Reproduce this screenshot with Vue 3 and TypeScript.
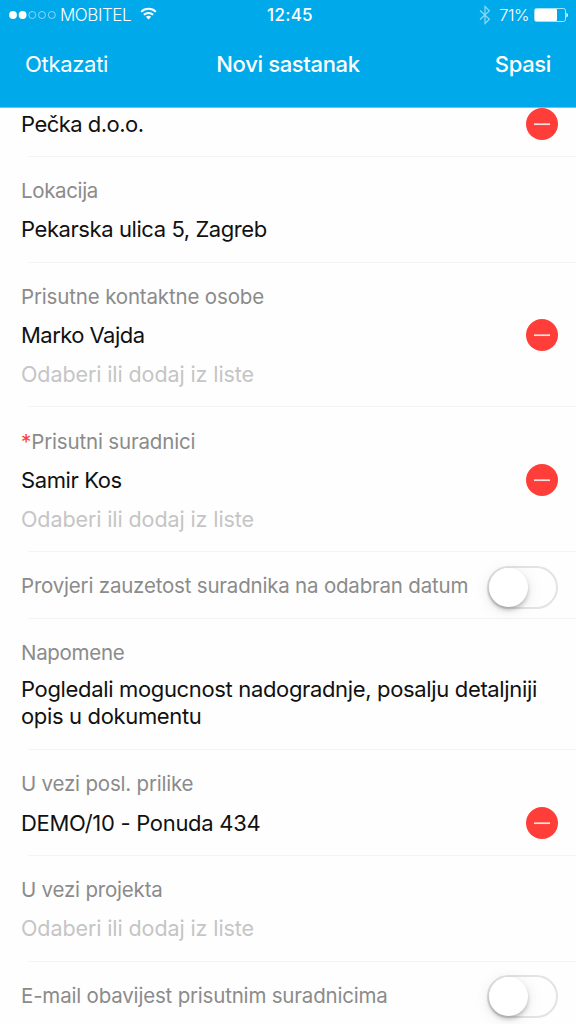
<script setup lang="ts">
interface Line {
  text: string
  kind: 'value' | 'hint'
  fit: string
  removable?: boolean
}
interface Section {
  id: string
  label?: string
  labelFit?: string
  required?: boolean
  toggle?: boolean
  lines?: Line[]
}

const hint: Line = { text: 'Odaberi ili dodaj iz liste', kind: 'hint', fit: 'f-hint' }

const sections: Section[] = [
  { id: 'company', lines: [{ text: 'Pečka d.o.o.', kind: 'value', fit: 'f-company', removable: true }] },
  { id: 'location', label: 'Lokacija', labelFit: 'l-location', lines: [{ text: 'Pekarska ulica 5, Zagreb', kind: 'value', fit: 'f-address' }] },
  { id: 'contacts', label: 'Prisutne kontaktne osobe', labelFit: 'l-contacts', lines: [{ text: 'Marko Vajda', kind: 'value', fit: 'f-marko', removable: true }, hint] },
  { id: 'staff', label: 'Prisutni suradnici', labelFit: 'l-staff', required: true, lines: [{ text: 'Samir Kos', kind: 'value', fit: 'f-samir', removable: true }, hint] },
  { id: 'busy', label: 'Provjeri zauzetost suradnika na odabran datum', labelFit: 'l-busy', toggle: true },
  { id: 'notes', label: 'Napomene', labelFit: 'l-notes', lines: [{ text: 'Pogledali mogucnost nadogradnje, posalju detaljniji\nopis u dokumentu', kind: 'value', fit: 'f-notes' }] },
  { id: 'deal', label: 'U vezi posl. prilike', labelFit: 'l-deal', lines: [{ text: 'DEMO/10 - Ponuda 434', kind: 'value', fit: 'f-deal', removable: true }] },
  { id: 'project', label: 'U vezi projekta', labelFit: 'l-project', lines: [hint] },
  { id: 'email', label: 'E-mail obavijest prisutnim suradnicima', labelFit: 'l-email', toggle: true },
]
</script>

<template>
  <div class="screen">
    <header class="top">
      <div class="status">
        <div class="carrier">
          <svg class="dots" width="48" height="10" viewBox="0 0 48 10">
            <circle cx="4" cy="5" r="3.9" fill="#fff" />
            <circle cx="13.6" cy="5" r="3.9" fill="#fff" />
            <g fill="none" stroke="#fff" stroke-opacity=".65" stroke-width=".8">
              <circle cx="23.3" cy="5" r="3.5" />
              <circle cx="33" cy="5" r="3.5" />
              <circle cx="42.8" cy="5" r="3.5" />
            </g>
          </svg>
          <span class="operator">MOBITEL</span>
          <svg class="wifi" width="17" height="13" viewBox="0 0 18 14">
            <g fill="none" stroke="#fff" stroke-width="2.1">
              <path d="M1.1 5.2a11.3 11.3 0 0 1 15.8 0" />
              <path d="M4 8.4a7.2 7.2 0 0 1 10 0" />
            </g>
            <path d="M6.2 10.6a4.1 4.1 0 0 1 5.6 0L9 13.4z" fill="#fff" />
          </svg>
        </div>
        <span class="clock">12:45</span>
        <div class="power">
          <svg class="bluetooth" width="12" height="20" viewBox="0 0 12 20">
            <path d="M1 5.5l9.4 8.7L6 18.5v-17l4.4 4.3L1 14.5" fill="none" stroke="#fff" stroke-opacity=".55" stroke-width="1.2" />
          </svg>
          <span class="percent">71%</span>
          <svg class="battery" width="34" height="14" viewBox="0 0 34 14">
            <rect x=".5" y=".5" width="31" height="13" rx="2" fill="none" stroke="#fff" stroke-opacity=".65" />
            <rect x="1" y="1" width="22" height="12" rx="1" fill="#fff" />
            <path d="M32.4 4.7a2.6 2.6 0 0 1 0 4.8z" fill="#fff" />
          </svg>
        </div>
      </div>
      <nav class="bar">
        <span class="cancel">Otkazati</span>
        <span class="title">Novi sastanak</span>
        <span class="save">Spasi</span>
      </nav>
    </header>

    <main>
      <section v-for="s in sections" :key="s.id" :class="['section', s.id, { switchrow: s.toggle }]">
        <div v-if="s.label" class="label">
          <span v-if="s.required" class="star">*</span><span :class="s.labelFit">{{ s.label }}</span>
        </div>
        <div v-for="l in s.lines" :key="l.text" :class="['line', l.kind]">
          <span :class="l.fit">{{ l.text }}</span>
          <svg v-if="l.removable" class="remove" width="32" height="32" viewBox="0 0 32 32">
            <circle cx="16" cy="16" r="16" fill="#ff3e39" />
            <path d="M8 16.2h16" stroke="#fff" stroke-opacity=".85" stroke-width="1.7" />
          </svg>
        </div>
        <div v-if="s.toggle" class="toggle"><div class="knob"></div></div>
      </section>
    </main>
  </div>
</template>

<style>
body {
  margin: 0;
  overflow: hidden;
}
</style>

<style scoped>
.screen {
  width: 576px;
  height: 1024px;
  overflow: hidden;
  background: #fefefe;
  color: #111;
  font-family: Inter, 'Liberation Sans', sans-serif;
  font-size: 22px;
  white-space: pre;
}
.top {
  box-sizing: border-box;
  height: 108px;
  background: #00a9ea;
  border-bottom: 1px solid #62c8ef;
  color: #fff;
}
.status {
  display: grid;
  grid-template-columns: 1fr auto 1fr;
  align-items: center;
  height: 29px;
  padding: 0 8px 0 9px;
}
.carrier,
.power {
  display: flex;
  align-items: center;
}
.power { justify-content: flex-end; }
.operator { margin-left: 3px; font-size: 17px; font-weight: 350; letter-spacing: -0.45px; }
.wifi { margin: -2px 0 0 9px; }
.clock { padding-left: 3px; font-size: 17px; font-weight: 500; letter-spacing: 0.3px; }
.percent { margin: 0 5px 0 8px; font-size: 16.5px; font-weight: 350; letter-spacing: -0.5px; }
.bar {
  display: grid;
  grid-template-columns: 1fr auto 1fr;
  align-items: center;
  height: 70px;
  padding: 0 25px;
}
.cancel { letter-spacing: -0.3px; }
.title { font-weight: 500; letter-spacing: -0.35px; }
.save { justify-self: end; font-weight: 500; letter-spacing: -0.35px; }

.section {
  box-sizing: border-box;
  height: 106px;
  padding: 14px 18px 0 21px;
  background: linear-gradient(#f4f4f4, #f4f4f4) 28px 100% / 100% 1px no-repeat;
}
.company { height: 49px; padding-top: 0; }
.company .line { height: 32px; }
.contacts { height: 144px; }
.staff { height: 145px; padding-top: 15px; }
.notes { height: 131px; }
.deal .label { height: 39px; }
.switchrow {
  display: flex;
  align-items: center;
  justify-content: space-between;
  height: 67px;
  padding-top: 0;
}
.email { height: 68px; background: none; }
.label {
  height: 38px;
  line-height: 39px;
  color: #8b8b8b;
  font-size: 20.5px;
}
.switchrow .label { line-height: 37px; }
.star { color: #ff3e39; }
.line {
  display: flex;
  align-items: center;
  justify-content: space-between;
  height: 39px;
}
.hint { color: #c5c5c5; font-size: 21.5px; }
.notes .line { height: 62px; line-height: 27px; align-items: flex-start; padding-top: 5px; }

.f-company { letter-spacing: -0.52px; }
.f-address { letter-spacing: -0.42px; }
.f-marko { letter-spacing: -0.54px; }
.f-samir { letter-spacing: -0.4px; }
.f-notes { letter-spacing: -0.345px; }
.f-deal { letter-spacing: -0.3px; }
.f-hint { letter-spacing: -0.1px; }
.l-location { letter-spacing: -0.35px; }
.l-contacts { letter-spacing: -0.16px; }
.l-staff { letter-spacing: -0.17px; }
.l-busy,
.l-deal,
.l-project { letter-spacing: -0.2px; }
.l-notes { letter-spacing: -0.3px; }
.l-email { letter-spacing: -0.19px; }

.toggle {
  box-sizing: border-box;
  width: 71px;
  height: 43px;
  border: 2px solid #e3e3e3;
  border-radius: 22px;
}
.busy .toggle { margin-top: 4px; }
.email .toggle { margin-top: 1px; }
.knob {
  width: 39px;
  height: 39px;
  border-radius: 50%;
  background: #fff;
  box-shadow: 0 3px 4px rgba(0, 0, 0, 0.22), 0 3px 16px rgba(0, 0, 0, 0.1);
}
</style>
